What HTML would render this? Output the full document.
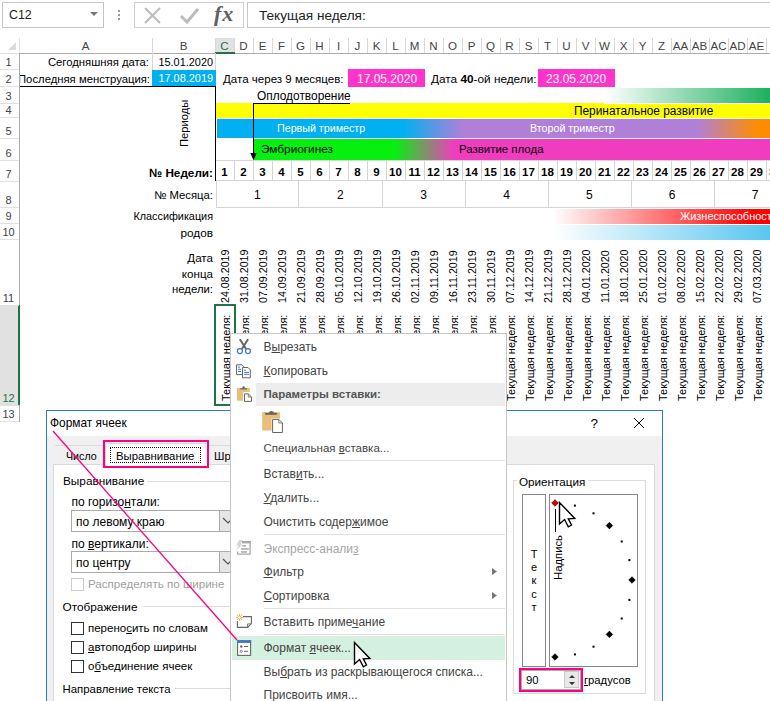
<!DOCTYPE html><html><head><meta charset="utf-8"><style>
*{box-sizing:border-box}
html,body{margin:0;padding:0}
body{width:770px;height:701px;position:relative;overflow:hidden;background:#fff;font-family:"Liberation Sans",sans-serif;color:#000}
.ab{position:absolute}
.t{position:absolute;white-space:nowrap;line-height:1}
.rot{position:absolute;white-space:nowrap;line-height:1;transform-origin:0 0;transform:rotate(-90deg)}

</style></head><body>
<div class="ab" style="left:2px;top:2px;width:102px;height:26px;border:1px solid #C6C6C6"></div>
<div class="t" style="left:9px;top:9px;font-size:12.4px;color:#222">C12</div>
<svg class="ab" style="left:89px;top:11px" width="10" height="6"><path d="M1 1 L9 1 L5 5 Z" fill="#777"/></svg>
<div class="ab" style="left:118px;top:10px;width:2px;height:2px;background:#999"></div>
<div class="ab" style="left:118px;top:14px;width:2px;height:2px;background:#999"></div>
<div class="ab" style="left:118px;top:18px;width:2px;height:2px;background:#999"></div>
<div class="ab" style="left:134px;top:2px;width:110px;height:26px;border:1px solid #D0D0D0"></div>
<svg class="ab" style="left:140px;top:4px" width="100" height="22"><path d="M5 4 L20 19 M20 4 L5 19" stroke="#BDBDBD" stroke-width="2.2" fill="none"/><path d="M41 12 L47 18 L58 5" stroke="#BDBDBD" stroke-width="3" fill="none"/></svg>
<div class="t" style="left:214px;top:3px;font-family:'Liberation Serif',serif;font-style:italic;font-weight:bold;font-size:22px;color:#606060;letter-spacing:1px">fx</div>
<div class="ab" style="left:247px;top:2px;width:540px;height:26px;border:1px solid #C6C6C6"></div>
<div class="t" style="left:259px;top:9px;font-size:13.6px;color:#222">Текущая неделя:</div>
<div class="ab" style="left:215px;top:38px;width:20px;height:15px;background:#E1E1E1"></div>
<div class="t" style="left:19px;top:40px;width:133px;text-align:center;font-size:11.6px;color:#444">A</div>
<div class="ab" style="left:152px;top:38px;width:1px;height:15px;background:#D8D8D8"></div>
<div class="t" style="left:152px;top:40px;width:63px;text-align:center;font-size:11.6px;color:#444">B</div>
<div class="ab" style="left:215px;top:38px;width:1px;height:15px;background:#D8D8D8"></div>
<div class="t" style="left:215px;top:40px;width:19px;text-align:center;font-size:11.6px;color:#217346">C</div>
<div class="ab" style="left:234px;top:38px;width:1px;height:15px;background:#D8D8D8"></div>
<div class="t" style="left:234px;top:40px;width:19px;text-align:center;font-size:11.6px;color:#444">D</div>
<div class="ab" style="left:253px;top:38px;width:1px;height:15px;background:#D8D8D8"></div>
<div class="t" style="left:253px;top:40px;width:19px;text-align:center;font-size:11.6px;color:#444">E</div>
<div class="ab" style="left:272px;top:38px;width:1px;height:15px;background:#D8D8D8"></div>
<div class="t" style="left:272px;top:40px;width:19px;text-align:center;font-size:11.6px;color:#444">F</div>
<div class="ab" style="left:291px;top:38px;width:1px;height:15px;background:#D8D8D8"></div>
<div class="t" style="left:291px;top:40px;width:19px;text-align:center;font-size:11.6px;color:#444">G</div>
<div class="ab" style="left:310px;top:38px;width:1px;height:15px;background:#D8D8D8"></div>
<div class="t" style="left:310px;top:40px;width:19px;text-align:center;font-size:11.6px;color:#444">H</div>
<div class="ab" style="left:329px;top:38px;width:1px;height:15px;background:#D8D8D8"></div>
<div class="t" style="left:329px;top:40px;width:19px;text-align:center;font-size:11.6px;color:#444">I</div>
<div class="ab" style="left:348px;top:38px;width:1px;height:15px;background:#D8D8D8"></div>
<div class="t" style="left:348px;top:40px;width:19px;text-align:center;font-size:11.6px;color:#444">J</div>
<div class="ab" style="left:367px;top:38px;width:1px;height:15px;background:#D8D8D8"></div>
<div class="t" style="left:367px;top:40px;width:19px;text-align:center;font-size:11.6px;color:#444">K</div>
<div class="ab" style="left:386px;top:38px;width:1px;height:15px;background:#D8D8D8"></div>
<div class="t" style="left:386px;top:40px;width:19px;text-align:center;font-size:11.6px;color:#444">L</div>
<div class="ab" style="left:405px;top:38px;width:1px;height:15px;background:#D8D8D8"></div>
<div class="t" style="left:405px;top:40px;width:19px;text-align:center;font-size:11.6px;color:#444">M</div>
<div class="ab" style="left:424px;top:38px;width:1px;height:15px;background:#D8D8D8"></div>
<div class="t" style="left:424px;top:40px;width:19px;text-align:center;font-size:11.6px;color:#444">N</div>
<div class="ab" style="left:443px;top:38px;width:1px;height:15px;background:#D8D8D8"></div>
<div class="t" style="left:443px;top:40px;width:19px;text-align:center;font-size:11.6px;color:#444">O</div>
<div class="ab" style="left:462px;top:38px;width:1px;height:15px;background:#D8D8D8"></div>
<div class="t" style="left:462px;top:40px;width:19px;text-align:center;font-size:11.6px;color:#444">P</div>
<div class="ab" style="left:481px;top:38px;width:1px;height:15px;background:#D8D8D8"></div>
<div class="t" style="left:481px;top:40px;width:19px;text-align:center;font-size:11.6px;color:#444">Q</div>
<div class="ab" style="left:500px;top:38px;width:1px;height:15px;background:#D8D8D8"></div>
<div class="t" style="left:500px;top:40px;width:19px;text-align:center;font-size:11.6px;color:#444">R</div>
<div class="ab" style="left:519px;top:38px;width:1px;height:15px;background:#D8D8D8"></div>
<div class="t" style="left:519px;top:40px;width:19px;text-align:center;font-size:11.6px;color:#444">S</div>
<div class="ab" style="left:538px;top:38px;width:1px;height:15px;background:#D8D8D8"></div>
<div class="t" style="left:538px;top:40px;width:19px;text-align:center;font-size:11.6px;color:#444">T</div>
<div class="ab" style="left:557px;top:38px;width:1px;height:15px;background:#D8D8D8"></div>
<div class="t" style="left:557px;top:40px;width:19px;text-align:center;font-size:11.6px;color:#444">U</div>
<div class="ab" style="left:576px;top:38px;width:1px;height:15px;background:#D8D8D8"></div>
<div class="t" style="left:576px;top:40px;width:19px;text-align:center;font-size:11.6px;color:#444">V</div>
<div class="ab" style="left:595px;top:38px;width:1px;height:15px;background:#D8D8D8"></div>
<div class="t" style="left:595px;top:40px;width:19px;text-align:center;font-size:11.6px;color:#444">W</div>
<div class="ab" style="left:614px;top:38px;width:1px;height:15px;background:#D8D8D8"></div>
<div class="t" style="left:614px;top:40px;width:19px;text-align:center;font-size:11.6px;color:#444">X</div>
<div class="ab" style="left:633px;top:38px;width:1px;height:15px;background:#D8D8D8"></div>
<div class="t" style="left:633px;top:40px;width:19px;text-align:center;font-size:11.6px;color:#444">Y</div>
<div class="ab" style="left:652px;top:38px;width:1px;height:15px;background:#D8D8D8"></div>
<div class="t" style="left:652px;top:40px;width:19px;text-align:center;font-size:11.6px;color:#444">Z</div>
<div class="ab" style="left:671px;top:38px;width:1px;height:15px;background:#D8D8D8"></div>
<div class="t" style="left:671px;top:40px;width:19px;text-align:center;font-size:11.6px;color:#444">AA</div>
<div class="ab" style="left:690px;top:38px;width:1px;height:15px;background:#D8D8D8"></div>
<div class="t" style="left:690px;top:40px;width:19px;text-align:center;font-size:11.6px;color:#444">AB</div>
<div class="ab" style="left:709px;top:38px;width:1px;height:15px;background:#D8D8D8"></div>
<div class="t" style="left:709px;top:40px;width:19px;text-align:center;font-size:11.6px;color:#444">AC</div>
<div class="ab" style="left:728px;top:38px;width:1px;height:15px;background:#D8D8D8"></div>
<div class="t" style="left:728px;top:40px;width:19px;text-align:center;font-size:11.6px;color:#444">AD</div>
<div class="ab" style="left:747px;top:38px;width:1px;height:15px;background:#D8D8D8"></div>
<div class="t" style="left:747px;top:40px;width:19px;text-align:center;font-size:11.6px;color:#444">AE</div>
<div class="ab" style="left:766px;top:38px;width:1px;height:15px;background:#D8D8D8"></div>
<div class="t" style="left:766px;top:40px;width:19px;text-align:center;font-size:11.6px;color:#444"></div>
<div class="ab" style="left:785px;top:38px;width:1px;height:15px;background:#D8D8D8"></div>
<div class="ab" style="left:19px;top:53px;width:751px;height:1px;background:#ABABAB"></div>
<div class="ab" style="left:0px;top:53px;width:19px;height:1px;background:#E0E0E0"></div>
<div class="ab" style="left:215px;top:52px;width:20px;height:2px;background:#217346"></div>
<svg class="ab" style="left:8px;top:42px" width="9" height="9"><path d="M0 8 L8 0 L8 8 Z" fill="#DADADA"/></svg>
<div class="ab" style="left:19px;top:38px;width:1px;height:15px;background:#E0E0E0"></div>
<div class="ab" style="left:19px;top:53px;width:1px;height:369px;background:#ABABAB"></div>
<div class="ab" style="left:0px;top:305px;width:19px;height:100px;background:#E1E1E1"></div>
<div class="ab" style="left:18px;top:305px;width:2px;height:100px;background:#217346"></div>
<div class="t" style="left:-1px;top:57px;width:19px;text-align:center;font-size:11px;color:#444">1</div>
<div class="ab" style="left:0px;top:69px;width:19px;height:1px;background:#E0E0E0"></div>
<div class="t" style="left:-1px;top:74px;width:19px;text-align:center;font-size:11px;color:#444">2</div>
<div class="ab" style="left:0px;top:86px;width:19px;height:1px;background:#E0E0E0"></div>
<div class="t" style="left:-1px;top:91px;width:19px;text-align:center;font-size:11px;color:#444">3</div>
<div class="ab" style="left:0px;top:103px;width:19px;height:1px;background:#E0E0E0"></div>
<div class="t" style="left:-1px;top:105px;width:19px;text-align:center;font-size:11px;color:#444">4</div>
<div class="ab" style="left:0px;top:117px;width:19px;height:1px;background:#E0E0E0"></div>
<div class="t" style="left:-1px;top:126px;width:19px;text-align:center;font-size:11px;color:#444">5</div>
<div class="ab" style="left:0px;top:138px;width:19px;height:1px;background:#E0E0E0"></div>
<div class="t" style="left:-1px;top:148px;width:19px;text-align:center;font-size:11px;color:#444">6</div>
<div class="ab" style="left:0px;top:160px;width:19px;height:1px;background:#E0E0E0"></div>
<div class="t" style="left:-1px;top:169px;width:19px;text-align:center;font-size:11px;color:#444">7</div>
<div class="ab" style="left:0px;top:181px;width:19px;height:1px;background:#E0E0E0"></div>
<div class="t" style="left:-1px;top:195px;width:19px;text-align:center;font-size:11px;color:#444">8</div>
<div class="ab" style="left:0px;top:207px;width:19px;height:1px;background:#E0E0E0"></div>
<div class="t" style="left:-1px;top:211px;width:19px;text-align:center;font-size:11px;color:#444">9</div>
<div class="ab" style="left:0px;top:223px;width:19px;height:1px;background:#E0E0E0"></div>
<div class="t" style="left:-1px;top:227px;width:19px;text-align:center;font-size:11px;color:#444">10</div>
<div class="ab" style="left:0px;top:239px;width:19px;height:1px;background:#E0E0E0"></div>
<div class="t" style="left:-1px;top:293px;width:19px;text-align:center;font-size:11px;color:#444">11</div>
<div class="ab" style="left:0px;top:305px;width:19px;height:1px;background:#E0E0E0"></div>
<div class="t" style="left:-1px;top:393px;width:19px;text-align:center;font-size:11px;color:#217346">12</div>
<div class="ab" style="left:0px;top:405px;width:19px;height:1px;background:#E0E0E0"></div>
<div class="t" style="left:-1px;top:409px;width:19px;text-align:center;font-size:11px;color:#444">13</div>
<div class="ab" style="left:0px;top:421px;width:19px;height:1px;background:#E0E0E0"></div>
<div class="ab" style="left:152px;top:53px;width:1px;height:17px;background:#D4D4D4"></div>
<div class="ab" style="left:215px;top:53px;width:1px;height:17px;background:#D4D4D4"></div>
<div class="t" style="left:20px;top:57px;width:129px;text-align:right;font-size:11.3px">Сегодняшняя дата:</div>
<div class="t" style="left:152px;top:57px;width:61px;text-align:right;font-size:10.9px">15.01.2020</div>
<div class="ab" style="left:20px;top:69px;width:133px;height:17px;overflow:hidden"><div class="t" style="right:3px;top:5px;font-size:11.3px">Последняя менструация:</div></div>
<div class="ab" style="left:152px;top:70px;width:64px;height:16px;background:#00B0F0"></div>
<div class="t" style="left:152px;top:73px;width:61px;text-align:right;font-size:10.9px;color:#fff">17.08.2019</div>
<div class="ab" style="left:20px;top:86px;width:196px;height:1px;background:#000"></div>
<div class="ab" style="left:215px;top:86px;width:1px;height:95px;background:#000"></div>
<div class="t" style="left:223px;top:74px;font-size:11.55px">Дата через 9 месяцев:</div>
<div class="ab" style="left:348px;top:69px;width:77px;height:18px;background:#FF33CC"></div>
<div class="t" style="left:357px;top:73px;font-size:12px;color:#fff">17.05.2020</div>
<div class="t" style="left:431px;top:74px;font-size:11.8px">Дата <b>40</b>-ой недели:</div>
<div class="ab" style="left:538px;top:69px;width:77px;height:18px;background:#FF33CC"></div>
<div class="t" style="left:546px;top:73px;font-size:12px;color:#fff">23.05.2020</div>
<div class="ab" style="left:604px;top:88px;width:166px;height:15px;background:linear-gradient(90deg,#fff,#1DB05E)"></div>
<div class="t" style="left:257px;top:91px;font-size:11.9px">Оплодотворение</div>
<div class="ab" style="left:216px;top:103px;width:388px;height:15px;background:#FFFF00"></div>
<div class="ab" style="left:604px;top:104px;width:166px;height:14px;background:#FFFF00"></div>
<div class="t" style="left:574px;top:106px;font-size:11.87px">Перинатальное развитие</div>
<div class="ab" style="left:217px;top:119px;width:553px;height:19px;background:linear-gradient(90deg,#00B0F0 0px,#00B0F0 186px,#B07FD8 246px,#B07FD8 480px,#FF8C00 540px)"></div>
<div class="t" style="left:277px;top:123px;font-size:10.7px;color:#fff">Первый триместр</div>
<div class="t" style="left:530px;top:123px;font-size:10.7px;color:#fff">Второй триместр</div>
<div class="ab" style="left:254px;top:139px;width:516px;height:21px;background:linear-gradient(90deg,#05F00F 0px,#05F00F 140px,#F03CBE 200px)"></div>
<div class="t" style="left:261px;top:144px;font-size:11.8px">Эмбриогинез</div>
<div class="t" style="left:459px;top:144px;font-size:11.45px">Развитие плода</div>
<div class="ab" style="left:253px;top:103px;width:97px;height:1px;background:#000"></div>
<div class="ab" style="left:253px;top:103px;width:1px;height:52px;background:#000"></div>
<svg class="ab" style="left:249px;top:152px" width="9" height="9"><path d="M1.3 1 L7.7 1 L4.5 8.3 Z" fill="#000"/></svg>
<div class="rot" style="left:179px;top:147px;font-size:11.2px">Периоды</div>
<div class="t" style="left:100px;top:166.5px;width:113px;text-align:right;font-size:11.75px;font-weight:bold">№ Недели:</div>
<div class="ab" style="left:216px;top:160px;width:554px;height:1px;background:#D4D4D4"></div>
<div class="ab" style="left:216px;top:180px;width:554px;height:1px;background:#D4D4D4"></div>
<div class="t" style="left:215px;top:167px;width:19px;text-align:center;font-size:11.5px;font-weight:bold">1</div>
<div class="t" style="left:234px;top:167px;width:19px;text-align:center;font-size:11.5px;font-weight:bold">2</div>
<div class="ab" style="left:234px;top:160px;width:1px;height:21px;background:#D4D4D4"></div>
<div class="t" style="left:253px;top:167px;width:19px;text-align:center;font-size:11.5px;font-weight:bold">3</div>
<div class="ab" style="left:253px;top:160px;width:1px;height:21px;background:#D4D4D4"></div>
<div class="t" style="left:272px;top:167px;width:19px;text-align:center;font-size:11.5px;font-weight:bold">4</div>
<div class="ab" style="left:272px;top:160px;width:1px;height:21px;background:#D4D4D4"></div>
<div class="t" style="left:291px;top:167px;width:19px;text-align:center;font-size:11.5px;font-weight:bold">5</div>
<div class="ab" style="left:291px;top:160px;width:1px;height:21px;background:#D4D4D4"></div>
<div class="t" style="left:310px;top:167px;width:19px;text-align:center;font-size:11.5px;font-weight:bold">6</div>
<div class="ab" style="left:310px;top:160px;width:1px;height:21px;background:#D4D4D4"></div>
<div class="t" style="left:329px;top:167px;width:19px;text-align:center;font-size:11.5px;font-weight:bold">7</div>
<div class="ab" style="left:329px;top:160px;width:1px;height:21px;background:#D4D4D4"></div>
<div class="t" style="left:348px;top:167px;width:19px;text-align:center;font-size:11.5px;font-weight:bold">8</div>
<div class="ab" style="left:348px;top:160px;width:1px;height:21px;background:#D4D4D4"></div>
<div class="t" style="left:367px;top:167px;width:19px;text-align:center;font-size:11.5px;font-weight:bold">9</div>
<div class="ab" style="left:367px;top:160px;width:1px;height:21px;background:#D4D4D4"></div>
<div class="t" style="left:386px;top:167px;width:19px;text-align:center;font-size:11.5px;font-weight:bold">10</div>
<div class="ab" style="left:386px;top:160px;width:1px;height:21px;background:#D4D4D4"></div>
<div class="t" style="left:405px;top:167px;width:19px;text-align:center;font-size:11.5px;font-weight:bold">11</div>
<div class="ab" style="left:405px;top:160px;width:1px;height:21px;background:#D4D4D4"></div>
<div class="t" style="left:424px;top:167px;width:19px;text-align:center;font-size:11.5px;font-weight:bold">12</div>
<div class="ab" style="left:424px;top:160px;width:1px;height:21px;background:#D4D4D4"></div>
<div class="t" style="left:443px;top:167px;width:19px;text-align:center;font-size:11.5px;font-weight:bold">13</div>
<div class="ab" style="left:443px;top:160px;width:1px;height:21px;background:#D4D4D4"></div>
<div class="t" style="left:462px;top:167px;width:19px;text-align:center;font-size:11.5px;font-weight:bold">14</div>
<div class="ab" style="left:462px;top:160px;width:1px;height:21px;background:#D4D4D4"></div>
<div class="t" style="left:481px;top:167px;width:19px;text-align:center;font-size:11.5px;font-weight:bold">15</div>
<div class="ab" style="left:481px;top:160px;width:1px;height:21px;background:#D4D4D4"></div>
<div class="t" style="left:500px;top:167px;width:19px;text-align:center;font-size:11.5px;font-weight:bold">16</div>
<div class="ab" style="left:500px;top:160px;width:1px;height:21px;background:#D4D4D4"></div>
<div class="t" style="left:519px;top:167px;width:19px;text-align:center;font-size:11.5px;font-weight:bold">17</div>
<div class="ab" style="left:519px;top:160px;width:1px;height:21px;background:#D4D4D4"></div>
<div class="t" style="left:538px;top:167px;width:19px;text-align:center;font-size:11.5px;font-weight:bold">18</div>
<div class="ab" style="left:538px;top:160px;width:1px;height:21px;background:#D4D4D4"></div>
<div class="t" style="left:557px;top:167px;width:19px;text-align:center;font-size:11.5px;font-weight:bold">19</div>
<div class="ab" style="left:557px;top:160px;width:1px;height:21px;background:#D4D4D4"></div>
<div class="t" style="left:576px;top:167px;width:19px;text-align:center;font-size:11.5px;font-weight:bold">20</div>
<div class="ab" style="left:576px;top:160px;width:1px;height:21px;background:#D4D4D4"></div>
<div class="t" style="left:595px;top:167px;width:19px;text-align:center;font-size:11.5px;font-weight:bold">21</div>
<div class="ab" style="left:595px;top:160px;width:1px;height:21px;background:#D4D4D4"></div>
<div class="t" style="left:614px;top:167px;width:19px;text-align:center;font-size:11.5px;font-weight:bold">22</div>
<div class="ab" style="left:614px;top:160px;width:1px;height:21px;background:#D4D4D4"></div>
<div class="t" style="left:633px;top:167px;width:19px;text-align:center;font-size:11.5px;font-weight:bold">23</div>
<div class="ab" style="left:633px;top:160px;width:1px;height:21px;background:#D4D4D4"></div>
<div class="t" style="left:652px;top:167px;width:19px;text-align:center;font-size:11.5px;font-weight:bold">24</div>
<div class="ab" style="left:652px;top:160px;width:1px;height:21px;background:#D4D4D4"></div>
<div class="t" style="left:671px;top:167px;width:19px;text-align:center;font-size:11.5px;font-weight:bold">25</div>
<div class="ab" style="left:671px;top:160px;width:1px;height:21px;background:#D4D4D4"></div>
<div class="t" style="left:690px;top:167px;width:19px;text-align:center;font-size:11.5px;font-weight:bold">26</div>
<div class="ab" style="left:690px;top:160px;width:1px;height:21px;background:#D4D4D4"></div>
<div class="t" style="left:709px;top:167px;width:19px;text-align:center;font-size:11.5px;font-weight:bold">27</div>
<div class="ab" style="left:709px;top:160px;width:1px;height:21px;background:#D4D4D4"></div>
<div class="t" style="left:728px;top:167px;width:19px;text-align:center;font-size:11.5px;font-weight:bold">28</div>
<div class="ab" style="left:728px;top:160px;width:1px;height:21px;background:#D4D4D4"></div>
<div class="t" style="left:747px;top:167px;width:19px;text-align:center;font-size:11.5px;font-weight:bold">29</div>
<div class="ab" style="left:747px;top:160px;width:1px;height:21px;background:#D4D4D4"></div>
<div class="t" style="left:766px;top:167px;width:19px;text-align:center;font-size:11.5px;font-weight:bold">30</div>
<div class="ab" style="left:766px;top:160px;width:1px;height:21px;background:#D4D4D4"></div>
<div class="t" style="left:100px;top:190px;width:113px;text-align:right;font-size:11.3px">№ Месяца:</div>
<div class="ab" style="left:216px;top:207px;width:554px;height:1px;background:#D4D4D4"></div>
<div class="ab" style="left:216px;top:181px;width:1px;height:27px;background:#D4D4D4"></div>
<div class="t" style="left:216px;top:189px;width:82.5px;text-align:center;font-size:12px">1</div>
<div class="ab" style="left:298px;top:181px;width:1px;height:27px;background:#D4D4D4"></div>
<div class="t" style="left:298.5px;top:189px;width:83.5px;text-align:center;font-size:12px">2</div>
<div class="ab" style="left:382px;top:181px;width:1px;height:27px;background:#D4D4D4"></div>
<div class="t" style="left:382px;top:189px;width:83.39999999999998px;text-align:center;font-size:12px">3</div>
<div class="ab" style="left:465px;top:181px;width:1px;height:27px;background:#D4D4D4"></div>
<div class="t" style="left:465.4px;top:189px;width:82.39999999999998px;text-align:center;font-size:12px">4</div>
<div class="ab" style="left:548px;top:181px;width:1px;height:27px;background:#D4D4D4"></div>
<div class="t" style="left:547.8px;top:189px;width:82.90000000000009px;text-align:center;font-size:12px">5</div>
<div class="ab" style="left:631px;top:181px;width:1px;height:27px;background:#D4D4D4"></div>
<div class="t" style="left:630.7px;top:189px;width:82.79999999999995px;text-align:center;font-size:12px">6</div>
<div class="ab" style="left:714px;top:181px;width:1px;height:27px;background:#D4D4D4"></div>
<div class="t" style="left:713.5px;top:189px;width:83.0px;text-align:center;font-size:12px">7</div>
<div class="t" style="left:100px;top:211px;width:113px;text-align:right;font-size:10.83px">Классификация</div>
<div class="t" style="left:100px;top:227.5px;width:113px;text-align:right;font-size:11.8px">родов</div>
<div class="ab" style="left:553px;top:209px;width:217px;height:15px;background:linear-gradient(90deg,#fff 0px,#FF0000 200px)"></div>
<div class="t" style="left:680px;top:210.5px;font-size:11px;color:#fff">Жизнеспособность</div>
<div class="ab" style="left:553px;top:225px;width:217px;height:15px;background:linear-gradient(90deg,#fff,#59C6F0)"></div>
<div class="t" style="left:100px;top:252px;width:113px;text-align:right;font-size:11.6px">Дата</div>
<div class="t" style="left:100px;top:268px;width:113px;text-align:right;font-size:11.6px">конца</div>
<div class="t" style="left:100px;top:284px;width:113px;text-align:right;font-size:11.35px">недели:</div>
<div class="rot" style="left:220px;top:303px;font-size:10.7px">24.08.2019</div>
<div class="rot" style="left:221px;top:401px;font-size:11px">Текущая неделя:</div>
<div class="rot" style="left:239px;top:303px;font-size:10.7px">31.08.2019</div>
<div class="rot" style="left:240px;top:401px;font-size:11px">Текущая неделя:</div>
<div class="rot" style="left:258px;top:303px;font-size:10.7px">07.09.2019</div>
<div class="rot" style="left:259px;top:401px;font-size:11px">Текущая неделя:</div>
<div class="rot" style="left:277px;top:303px;font-size:10.7px">14.09.2019</div>
<div class="rot" style="left:278px;top:401px;font-size:11px">Текущая неделя:</div>
<div class="rot" style="left:296px;top:303px;font-size:10.7px">21.09.2019</div>
<div class="rot" style="left:297px;top:401px;font-size:11px">Текущая неделя:</div>
<div class="rot" style="left:315px;top:303px;font-size:10.7px">28.09.2019</div>
<div class="rot" style="left:316px;top:401px;font-size:11px">Текущая неделя:</div>
<div class="rot" style="left:334px;top:303px;font-size:10.7px">05.10.2019</div>
<div class="rot" style="left:335px;top:401px;font-size:11px">Текущая неделя:</div>
<div class="rot" style="left:353px;top:303px;font-size:10.7px">12.10.2019</div>
<div class="rot" style="left:354px;top:401px;font-size:11px">Текущая неделя:</div>
<div class="rot" style="left:372px;top:303px;font-size:10.7px">19.10.2019</div>
<div class="rot" style="left:373px;top:401px;font-size:11px">Текущая неделя:</div>
<div class="rot" style="left:391px;top:303px;font-size:10.7px">26.10.2019</div>
<div class="rot" style="left:392px;top:401px;font-size:11px">Текущая неделя:</div>
<div class="rot" style="left:410px;top:303px;font-size:10.7px">02.11.2019</div>
<div class="rot" style="left:411px;top:401px;font-size:11px">Текущая неделя:</div>
<div class="rot" style="left:429px;top:303px;font-size:10.7px">09.11.2019</div>
<div class="rot" style="left:430px;top:401px;font-size:11px">Текущая неделя:</div>
<div class="rot" style="left:448px;top:303px;font-size:10.7px">16.11.2019</div>
<div class="rot" style="left:449px;top:401px;font-size:11px">Текущая неделя:</div>
<div class="rot" style="left:467px;top:303px;font-size:10.7px">23.11.2019</div>
<div class="rot" style="left:468px;top:401px;font-size:11px">Текущая неделя:</div>
<div class="rot" style="left:486px;top:303px;font-size:10.7px">30.11.2019</div>
<div class="rot" style="left:487px;top:401px;font-size:11px">Текущая неделя:</div>
<div class="rot" style="left:505px;top:303px;font-size:10.7px">07.12.2019</div>
<div class="rot" style="left:506px;top:401px;font-size:11px">Текущая неделя:</div>
<div class="rot" style="left:524px;top:303px;font-size:10.7px">14.12.2019</div>
<div class="rot" style="left:525px;top:401px;font-size:11px">Текущая неделя:</div>
<div class="rot" style="left:543px;top:303px;font-size:10.7px">21.12.2019</div>
<div class="rot" style="left:544px;top:401px;font-size:11px">Текущая неделя:</div>
<div class="rot" style="left:562px;top:303px;font-size:10.7px">28.12.2019</div>
<div class="rot" style="left:563px;top:401px;font-size:11px">Текущая неделя:</div>
<div class="rot" style="left:581px;top:303px;font-size:10.7px">04.01.2020</div>
<div class="rot" style="left:582px;top:401px;font-size:11px">Текущая неделя:</div>
<div class="rot" style="left:600px;top:303px;font-size:10.7px">11.01.2020</div>
<div class="rot" style="left:601px;top:401px;font-size:11px">Текущая неделя:</div>
<div class="rot" style="left:619px;top:303px;font-size:10.7px">18.01.2020</div>
<div class="rot" style="left:620px;top:401px;font-size:11px">Текущая неделя:</div>
<div class="rot" style="left:638px;top:303px;font-size:10.7px">25.01.2020</div>
<div class="rot" style="left:639px;top:401px;font-size:11px">Текущая неделя:</div>
<div class="rot" style="left:657px;top:303px;font-size:10.7px">01.02.2020</div>
<div class="rot" style="left:658px;top:401px;font-size:11px">Текущая неделя:</div>
<div class="rot" style="left:676px;top:303px;font-size:10.7px">08.02.2020</div>
<div class="rot" style="left:677px;top:401px;font-size:11px">Текущая неделя:</div>
<div class="rot" style="left:695px;top:303px;font-size:10.7px">15.02.2020</div>
<div class="rot" style="left:696px;top:401px;font-size:11px">Текущая неделя:</div>
<div class="rot" style="left:714px;top:303px;font-size:10.7px">22.02.2020</div>
<div class="rot" style="left:715px;top:401px;font-size:11px">Текущая неделя:</div>
<div class="rot" style="left:733px;top:303px;font-size:10.7px">29.02.2020</div>
<div class="rot" style="left:734px;top:401px;font-size:11px">Текущая неделя:</div>
<div class="rot" style="left:752px;top:303px;font-size:10.7px">07.03.2020</div>
<div class="rot" style="left:753px;top:401px;font-size:11px">Текущая неделя:</div>
<div class="rot" style="left:771px;top:303px;font-size:10.7px">14.03.2020</div>
<div class="rot" style="left:772px;top:401px;font-size:11px">Текущая неделя:</div>
<div class="ab" style="left:214px;top:304px;width:22px;height:102px;border:2px solid #217346"></div>
<div class="ab" style="left:46px;top:410px;width:617px;height:300px;border:1px solid #2B7BD6;border-bottom:none;background:#F0F0F0"></div>
<div class="ab" style="left:47px;top:411px;width:615px;height:25px;background:#fff"></div>
<div class="t" style="left:50px;top:418px;font-size:11.9px;color:#000">Формат ячеек</div>
<div class="t" style="left:590.5px;top:416.5px;font-size:13.5px;color:#000">?</div>
<svg class="ab" style="left:633px;top:417px" width="13" height="13"><path d="M1 1 L11 11 M11 1 L1 11" stroke="#000" stroke-width="1" fill="none"/></svg>
<div class="ab" style="left:55px;top:445px;width:48px;height:1px;background:#DADADA"></div>
<div class="ab" style="left:209px;top:445px;width:30px;height:1px;background:#DADADA"></div>
<div class="ab" style="left:53px;top:464px;width:602px;height:260px;border:1px solid #DADADA;background:#fff"></div>
<div class="t" style="left:66px;top:451px;font-size:10.7px;color:#000">Число</div>
<div class="ab" style="left:105px;top:443px;width:103px;height:23px;background:#fff;border:1px solid #DADADA;border-bottom:none"></div>
<div class="ab" style="left:110px;top:447px;width:91px;height:16px;border:1px dotted #000"></div>
<div class="t" style="left:116px;top:451px;font-size:11.4px;color:#000">Выравнивание</div>
<div class="t" style="left:214px;top:451px;font-size:11.4px;color:#000">Шрифт</div>
<div class="ab" style="left:103px;top:440px;width:106px;height:28px;border:2px solid #FF0080"></div>
<div class="t" style="left:63px;top:476px;font-size:11.8px">Выравнивание</div>
<div class="ab" style="left:147px;top:481px;width:330px;height:1px;background:#DCDCDC"></div>
<div class="t" style="left:71.5px;top:496px;font-size:12px">по горизо<u>н</u>тали:</div>
<div class="ab" style="left:71px;top:510px;width:170px;height:22px;border:1px solid #ABABAB;background:#fff"></div>
<div class="ab" style="left:219px;top:511px;width:20px;height:20px;background:#E5E5E5;border-left:1px solid #ABABAB"></div>
<div class="t" style="left:76px;top:516px;font-size:12px">по левому краю</div>
<div class="t" style="left:71.5px;top:538px;font-size:12px">по <span style="text-decoration:underline">в</span>ертикали:</div>
<div class="ab" style="left:71px;top:551px;width:170px;height:22px;border:1px solid #ABABAB;background:#fff"></div>
<div class="ab" style="left:219px;top:552px;width:20px;height:20px;background:#E5E5E5;border-left:1px solid #ABABAB"></div>
<div class="t" style="left:76px;top:557px;font-size:12px">по центру</div>
<svg class="ab" style="left:222px;top:517px" width="12" height="8"><path d="M1 1 L6 6 L11 1" stroke="#555" stroke-width="1.2" fill="none"/></svg>
<svg class="ab" style="left:222px;top:558px" width="12" height="8"><path d="M1 1 L6 6 L11 1" stroke="#555" stroke-width="1.2" fill="none"/></svg>
<div class="ab" style="left:71px;top:578px;width:13px;height:13px;border:1px solid #CCCCCC;background:#fff"></div>
<div class="t" style="left:88px;top:578px;font-size:11.6px;color:#A0A0A0">Распределять по ширине</div>
<div class="t" style="left:62.5px;top:602px;font-size:11.8px">Отображение</div>
<div class="ab" style="left:143px;top:606px;width:330px;height:1px;background:#DCDCDC"></div>
<div class="ab" style="left:71px;top:622px;width:13px;height:13px;border:1px solid #333;background:#fff"></div>
<div class="t" style="left:88px;top:623px;font-size:11.5px">перено<u>с</u>ить по словам</div>
<div class="ab" style="left:71px;top:641px;width:13px;height:13px;border:1px solid #333;background:#fff"></div>
<div class="t" style="left:88px;top:642px;font-size:11.5px"><u>а</u>втоподбор ширины</div>
<div class="ab" style="left:71px;top:660px;width:13px;height:13px;border:1px solid #333;background:#fff"></div>
<div class="t" style="left:88px;top:661px;font-size:11.5px">о<u>б</u>ъединение ячеек</div>
<div class="t" style="left:62.5px;top:684px;font-size:11.4px">Направление текста</div>
<div class="ab" style="left:175px;top:688px;width:330px;height:1px;background:#DCDCDC"></div>
<div class="ab" style="left:513px;top:480px;width:133px;height:214px;border:1px solid #DCDCDC"></div>
<div class="ab" style="left:517px;top:474px;width:71px;height:12px;background:#fff"></div>
<div class="t" style="left:519px;top:476px;font-size:11.7px">Ориентация</div>
<div class="ab" style="left:522px;top:494px;width:24px;height:173px;border:1px solid #858592"></div>
<div class="ab" style="left:549px;top:494px;width:89px;height:173px;border:1px solid #858592"></div>
<div class="t" style="left:522px;top:548.7px;width:24px;text-align:center;font-size:11px">Т</div>
<div class="t" style="left:522px;top:562.0px;width:24px;text-align:center;font-size:11px">е</div>
<div class="t" style="left:522px;top:575.3000000000001px;width:24px;text-align:center;font-size:11px">к</div>
<div class="t" style="left:522px;top:588.6px;width:24px;text-align:center;font-size:11px">с</div>
<div class="t" style="left:522px;top:601.9000000000001px;width:24px;text-align:center;font-size:11px">т</div>
<svg class="ab" style="left:540px;top:490px" width="110" height="180"><path d="M15.0 9.7 L18.3 13.0 L15.0 16.3 L11.7 13.0 Z" fill="#E00000" stroke="#000" stroke-width="0.6"/><rect x="33.9" y="14.6" width="2" height="2" fill="#000"/><rect x="52.5" y="22.3" width="2" height="2" fill="#000"/><path d="M69.4 32.3 L72.7 35.6 L69.4 38.9 L66.1 35.6 Z" fill="#000" stroke="#000" stroke-width="0.6"/><rect x="80.7" y="50.5" width="2" height="2" fill="#000"/><rect x="88.4" y="69.1" width="2" height="2" fill="#000"/><path d="M92.0 86.7 L95.3 90.0 L92.0 93.3 L88.7 90.0 Z" fill="#000" stroke="#000" stroke-width="0.6"/><rect x="88.4" y="108.9" width="2" height="2" fill="#000"/><rect x="80.7" y="127.5" width="2" height="2" fill="#000"/><path d="M69.4 141.1 L72.7 144.4 L69.4 147.7 L66.1 144.4 Z" fill="#000" stroke="#000" stroke-width="0.6"/><rect x="52.5" y="155.7" width="2" height="2" fill="#000"/><rect x="33.9" y="163.4" width="2" height="2" fill="#000"/><path d="M15.0 163.7 L18.3 167.0 L15.0 170.3 L11.7 167.0 Z" fill="#000" stroke="#000" stroke-width="0.6"/><rect x="15" y="19" width="1" height="23" fill="#000"/></svg>
<div class="rot" style="left:553px;top:580px;font-size:11.3px">Надпись</div>
<svg class="ab" style="left:558.1px;top:501.1px" width="20" height="28"><path d="M1.5 1.5 L1.5 23 L6.6 18.5 L10.3 25.8 L13.5 24 L10.3 17.9 L16.8 17.4 Z" fill="#fff" stroke="#000" stroke-width="1.4" stroke-linejoin="miter"/></svg>
<div class="ab" style="left:519px;top:668px;width:64px;height:24px;border:2px solid #FF0080"></div>
<div class="ab" style="left:521px;top:670px;width:60px;height:20px;border:1px solid #ABABAB;background:#fff"></div>
<div class="t" style="left:526px;top:675px;font-size:11.3px">90</div>
<div class="ab" style="left:564px;top:671px;width:15px;height:17px;background:#E8E8E8;border:1px solid #C8C8C8"></div>
<svg class="ab" style="left:566px;top:672px" width="12" height="16"><path d="M3 6 L6 3 L9 6 Z M3 10 L6 13 L9 10 Z" fill="#333"/></svg>
<div class="t" style="left:584px;top:675px;font-size:11.25px"><u>г</u>радусов</div>
<div class="ab" style="left:230px;top:333px;width:277px;height:380px;border:1px solid #C6C6C6;background:#fff"></div>
<div class="ab" style="left:256px;top:383px;width:249px;height:23px;background:#EDEDED"></div>
<div class="t" style="left:263.5px;top:341.2px;font-size:12px;color:#444;">В<u>ы</u>резать</div>
<div class="t" style="left:263.5px;top:365.1px;font-size:12px;color:#444;"><u>К</u>опировать</div>
<div class="t" style="left:263.5px;top:389.1px;font-size:11.5px;color:#555;font-weight:bold;">Параметры вставки:</div>
<div class="t" style="left:263.5px;top:442.8px;font-size:11.5px;color:#444;">Специальная <u>в</u>ставка...</div>
<div class="ab" style="left:264px;top:460px;width:241px;height:1px;background:#E1E1E1"></div>
<div class="t" style="left:263.5px;top:468.4px;font-size:12px;color:#444;">Встав<u>и</u>ть...</div>
<div class="t" style="left:263.5px;top:492.4px;font-size:12px;color:#444;"><u>У</u>далить...</div>
<div class="t" style="left:263.5px;top:516.4px;font-size:12px;color:#444;">Очистить содер<u>ж</u>имое</div>
<div class="ab" style="left:264px;top:534px;width:241px;height:1px;background:#E1E1E1"></div>
<div class="t" style="left:263.5px;top:542.8px;font-size:12px;color:#A6A6A6;">Экспресс-анали<u>з</u></div>
<div class="t" style="left:263.5px;top:566.4px;font-size:12px;color:#444;"><u>Ф</u>ильтр</div>
<div class="t" style="left:263.5px;top:590.3px;font-size:12px;color:#444;"><u>С</u>ортировка</div>
<div class="ab" style="left:264px;top:608px;width:241px;height:1px;background:#E1E1E1"></div>
<div class="t" style="left:263.5px;top:615.5px;font-size:12px;color:#444;">Вставить приме<u>ч</u>ание</div>
<div class="ab" style="left:264px;top:634px;width:241px;height:1px;background:#E1E1E1"></div>
<div class="ab" style="left:232px;top:636px;width:273px;height:24px;background:#D3F0E0"></div>
<div class="t" style="left:263.5px;top:642.3px;font-size:12px;color:#444;">Формат <u>я</u>чеек...</div>
<div class="t" style="left:263.5px;top:666.0px;font-size:12px;color:#444;">Вы<u>б</u>рать из раскрывающегося списка...</div>
<div class="t" style="left:263.5px;top:689.3px;font-size:12px;color:#444;">Присвоить имя...</div>
<svg class="ab" style="left:491px;top:567px" width="7" height="34"><path d="M1 1 L6 4.5 L1 8 Z M1 25 L6 28.5 L1 32 Z" fill="#777"/></svg>
<svg class="ab" style="left:232px;top:336px" width="26" height="20"><path d="M8.2 3.8 L13.8 12.5 M15.7 3.8 L10.2 12.5" stroke="#666" stroke-width="2" stroke-linecap="round" fill="none"/><circle cx="7.9" cy="15.1" r="2.5" stroke="#3C78BE" stroke-width="1.2" fill="#fff"/><circle cx="16" cy="15.1" r="2.5" stroke="#3C78BE" stroke-width="1.2" fill="#fff"/></svg>
<svg class="ab" style="left:232px;top:360px" width="26" height="22"><path d="M4.6 4.8 H10 L11.5 6.3 V14.6 H4.6 Z" fill="#fff" stroke="#666" stroke-width="1"/><path d="M10.5 7.5 H16 L18.3 9.8 V17.8 H10.5 Z" fill="#fff" stroke="#666" stroke-width="1"/><path d="M6 7.1 H8 M6 9.3 H9 M6 11.5 H9" stroke="#3C78BE" stroke-width="1"/><path d="M12.2 10.2 H14 M12.2 12.4 H17 M12.2 14.3 H17" stroke="#3C78BE" stroke-width="1"/></svg>
<svg class="ab" style="left:232px;top:380px" width="26" height="24"><path d="M5 7.9 H17.8 V12 H11 V20.7 H5 Z" fill="#E8BE78"/><rect x="8.3" y="8.2" width="6.6" height="1.3" fill="#666"/><rect x="10.3" y="6.2" width="2.5" height="2.2" rx="1" fill="#666"/><path d="M12.5 13.9 H16.3 L19.5 17 V21.4 H12.5 Z" fill="#fff" stroke="#666" stroke-width="1"/><path d="M16.3 13.9 V17 H19.5" fill="none" stroke="#666" stroke-width="0.8"/></svg>
<svg class="ab" style="left:232px;top:380px" width="56" height="58"><path d="M30.2 32.3 H48 V38.6 H39.6 V50.5 H30.2 Z" fill="#E8BE78"/><rect x="33.1" y="32.8" width="12" height="2" fill="#666"/><path d="M36.6 33.2 A2.9 2.9 0 0 1 42.2 33.2 Z" fill="#666"/><path d="M40.6 39.4 H46.8 L50.4 43 V52.5 H40.6 Z" fill="#fff" stroke="#666" stroke-width="1"/><path d="M46.8 39.4 V43 H50.4" fill="none" stroke="#666" stroke-width="0.8"/></svg>
<svg class="ab" style="left:232px;top:536px" width="26" height="24"><path d="M9.2 5.6 H18.1 V18.1 H5.6 V15.5" fill="none" stroke="#A8A8A8" stroke-width="1.3"/><rect x="10" y="5.1" width="8.6" height="2.3" fill="#A8A8A8"/><rect x="10.3" y="9.2" width="3.7" height="1.4" fill="#A8A8A8"/><rect x="9" y="12.2" width="7.8" height="1.5" fill="#A8A8A8"/><rect x="9" y="15.2" width="5.9" height="1.5" fill="#A8A8A8"/><path d="M7.2 4.1 H10.6 L8.4 8.4 H10.2 L4.4 14.6 L6.2 9.6 H4.1 Z" fill="#D6D6D6"/></svg>
<svg class="ab" style="left:232px;top:610px" width="26" height="22"><path d="M11 6.6 H19.4 V13.6 L15.6 17.4 H5.4 V11" fill="none" stroke="#666" stroke-width="1.1"/><path d="M15.6 17.4 V13.9 H19.1" fill="none" stroke="#666" stroke-width="0.9"/><g stroke="#EDB055" stroke-width="0.9"><path d="M7.5 4 V11 M4 7.5 H11 M5 5 L10 10 M10 5 L5 10"/></g><circle cx="7.5" cy="7.5" r="1.6" fill="#fff" stroke="#EDB055" stroke-width="0.9"/></svg>
<svg class="ab" style="left:232px;top:636px" width="26" height="24"><rect x="5.6" y="4.8" width="13" height="14.6" fill="#fff" stroke="#666" stroke-width="1.1"/><rect x="5.1" y="4.3" width="14" height="2.6" fill="#3C78BE"/><circle cx="9.3" cy="10.5" r="1.2" fill="#666"/><circle cx="9.3" cy="15.3" r="1.1" fill="none" stroke="#666" stroke-width="0.8"/><path d="M12.1 10.5 H16 M12.1 15.3 H16" stroke="#666" stroke-width="1"/></svg>
<svg class="ab" style="left:353.0px;top:640.7px" width="20" height="28"><path d="M1.5 1.5 L1.5 23 L6.6 18.5 L10.3 25.8 L13.5 24 L10.3 17.9 L16.8 17.4 Z" fill="#fff" stroke="#000" stroke-width="1.4" stroke-linejoin="miter"/></svg>
<svg class="ab" style="left:0;top:0" width="770" height="701"><line x1="53" y1="431" x2="237" y2="640" stroke="#FF0080" stroke-width="1.3"/></svg>
</body></html>
